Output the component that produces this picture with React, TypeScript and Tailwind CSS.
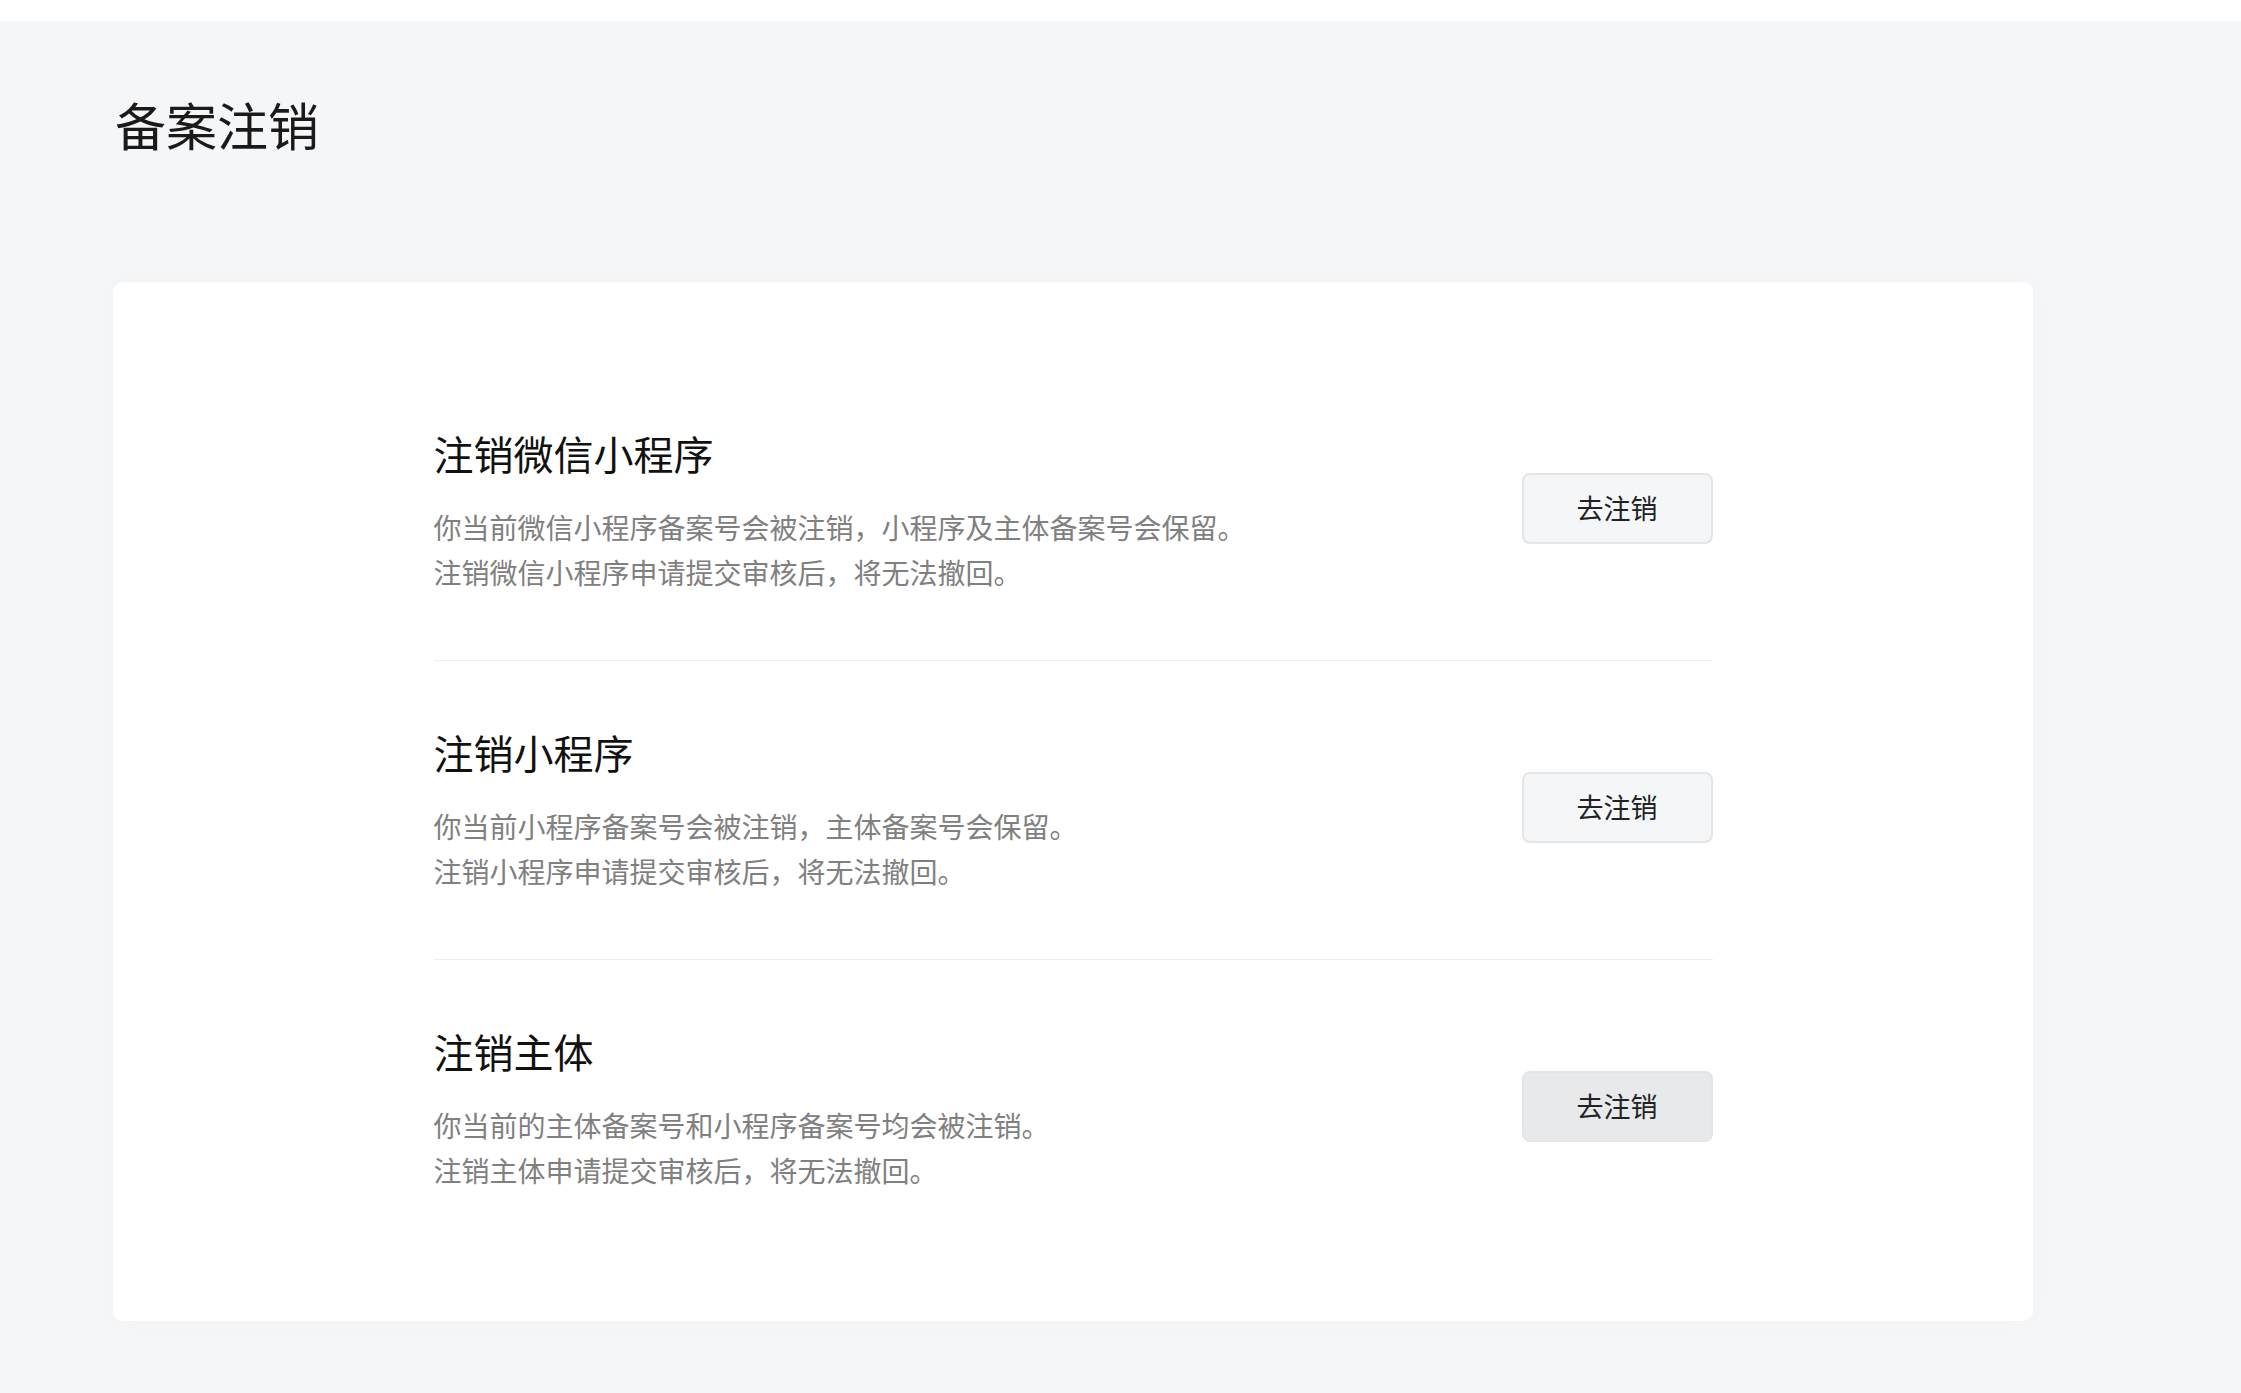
const sections = [
  {
    title: "注销微信小程序",
    lines: [
      "你当前微信小程序备案号会被注销，小程序及主体备案号会保留。",
      "注销微信小程序申请提交审核后，将无法撤回。",
    ],
  },
  {
    title: "注销小程序",
    lines: [
      "你当前小程序备案号会被注销，主体备案号会保留。",
      "注销小程序申请提交审核后，将无法撤回。",
    ],
  },
  {
    title: "注销主体",
    lines: [
      "你当前的主体备案号和小程序备案号均会被注销。",
      "注销主体申请提交审核后，将无法撤回。",
    ],
    active: true,
  },
];

export default function App() {
  return (
    <div
      className="min-h-[1393px] bg-[#f5f6f8]"
      style={{ fontFamily: '"Noto Sans CJK SC", "Noto Sans", sans-serif' }}
    >
      <div className="h-[21px] bg-white" />
      <div className="px-[113px] pb-[73px]">
        <h1 className="pt-[73px] pb-[128px] text-[51px] leading-[60px] font-normal text-[#1a1a1a] pl-[2px]">
          备案注销
        </h1>

        <div className="w-[1920px] rounded-[10px] bg-white shadow-[0_0_24px_rgba(0,0,0,0.02)] pt-[80px] pb-[63px]">
          <div className="mx-auto w-[1279px]">
            {sections.map((s, i) => (
              <div
                key={s.title}
                className={
                  "flex items-center justify-between pt-[71px] pb-[65px] " +
                  (i < sections.length - 1 ? "border-b border-[#ececec]" : "")
                }
              >
                <div>
                  <h2 className="text-[40px] leading-[40px] font-normal text-[#111]">
                    {s.title}
                  </h2>
                  <div className="mt-[32px] text-[28px] leading-[45px] text-[#808080]">
                    {s.lines.map((l) => (
                      <p key={l}>{l}</p>
                    ))}
                  </div>
                </div>
                <button
                  type="button"
                  className={
                    "mb-[11px] w-[191px] h-[71px] rounded-[8px] border-2 border-[#e4e5e7] text-[27px] text-[#222] " +
                    (s.active ? "bg-[#e8e9eb]" : "bg-[#f5f6f8]")
                  }
                >
                  去注销
                </button>
              </div>
            ))}
          </div>
        </div>
      </div>
    </div>
  );
}
